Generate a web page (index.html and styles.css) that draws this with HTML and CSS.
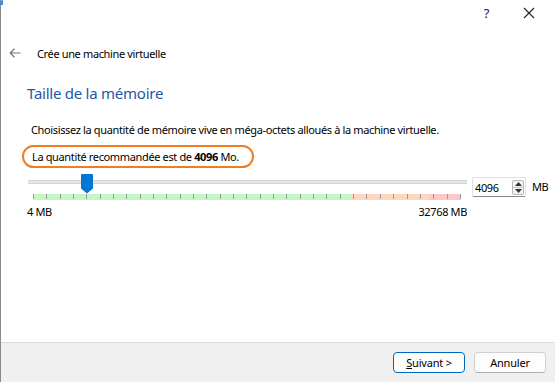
FILE: index.html
```html
<!DOCTYPE html>
<html lang="fr">
<head>
<meta charset="utf-8">
<title>Crée une machine virtuelle</title>
<link rel="stylesheet" href="styles.css">
</head>
<body>
<div class="window">
  <div class="titlebar">
    <span class="tb-btn help">?</span>
    <span class="tb-btn close">
      <svg width="12" height="12" viewBox="0 0 12 12"><path d="M1 1 L11 11 M11 1 L1 11" stroke="#222" stroke-width="1.1" fill="none"/></svg>
    </span>
  </div>
  <div class="header">
    <svg class="back" width="12" height="10" viewBox="0 0 12 10"><path d="M5.5 0.8 L1.2 5 L5.5 9.2 M1.2 5 H11.5" stroke="#777" stroke-width="1.2" fill="none"/></svg>
    <span class="header-title">Crée une machine virtuelle</span>
  </div>
  <div class="content">
    <h1 class="page-title">Taille de la mémoire</h1>
    <p class="desc">Choisissez la quantité de mémoire vive en méga-octets alloués à la machine virtuelle.</p>
    <div class="recommend">La quantité recommandée est de <b>4096</b> Mo.</div>
    <div class="slider-row">
      <div class="slider">
        <div class="track"></div>
        <svg class="thumb" width="12" height="20" viewBox="0 0 12 20"><path d="M1 0 H11 Q12 0 12 1 V14.5 L6 19.5 L0 14.5 V1 Q0 0 1 0 Z" fill="#0078d4"/></svg>
        <div class="band"></div>
      </div>
      <div class="spin">
        <span class="spin-val">4096</span>
        <span class="spin-btns">
          <span class="spin-up"><svg width="7" height="4" viewBox="0 0 7 4"><path d="M0 4 L3.5 0 L7 4Z" fill="#333"/></svg></span>
          <span class="spin-down"><svg width="7" height="4" viewBox="0 0 7 4"><path d="M0 0 L3.5 4 L7 0Z" fill="#333"/></svg></span>
        </span>
      </div>
      <span class="unit">MB</span>
    </div>
    <div class="range-labels">
      <span>4 MB</span>
      <span>32768 MB</span>
    </div>
  </div>
  <div class="footer">
    <button class="btn primary"><u>S</u>uivant &gt;</button>
    <button class="btn">Annuler</button>
  </div>
</div>
</body>
</html>
```

FILE: styles.css
```css
* { box-sizing: border-box; }
html, body { margin: 0; padding: 0; }
body {
  width: 555px;
  height: 382px;
  overflow: hidden;
  background: #fff;
  font-family: "Noto Sans", "DejaVu Sans", sans-serif;
  font-size: 11px;
  letter-spacing: -0.36px;
  color: #000;
}
.window {
  width: 555px;
  height: 382px;
  display: flex;
  flex-direction: column;
  border-left: 1px solid #8a8a8a;
  position: relative;
}
.window::before {
  content: "";
  position: absolute;
  left: -1px;
  top: 0;
  width: 3px;
  height: 5px;
  background: #3a8ee6;
  border-top-left-radius: 3px;
}
.titlebar {
  height: 30px;
  display: flex;
  justify-content: flex-end;
  align-items: center;
  padding-right: 20px;
  padding-bottom: 4px;
}
.tb-btn {
  display: flex;
  align-items: center;
  justify-content: center;
  height: 16px;
}
.help {
  font-size: 13px;
  margin-right: 34px;
  color: #222;
}
.header {
  height: 42px;
  display: flex;
  align-items: center;
  padding-left: 8px;
  padding-top: 4px;
}
.back { margin-right: 16px; }
.header-title { font-size: 11px; }
.content {
  flex: 1;
  padding-left: 26px;
  display: flex;
  flex-direction: column;
}
.page-title {
  margin: 11px 0 0 0;
  font-size: 15px;
  font-weight: normal;
  letter-spacing: -0.25px;
  color: #1d57a6;
  line-height: 20px;
}
.desc {
  margin: 19px 0 0 4px;
  line-height: 16px;
}
.recommend {
  margin: 7px 0 0 -5px;
  align-self: flex-start;
  width: 232px;
  height: 23px;
  border: 2px solid #f07d22;
  border-radius: 12px;
  padding-left: 8px;
  line-height: 19px;
  white-space: nowrap;
}
.recommend b { font-weight: bold; }
.slider-row {
  margin-top: 5px;
  display: flex;
  align-items: flex-start;
  height: 28px;
}
.slider {
  position: relative;
  width: 439px;
  height: 28px;
  margin-left: 1px;
}
.track {
  position: absolute;
  left: 0;
  right: 0;
  top: 7px;
  height: 4px;
  background: #e6e6e6;
  border-top: 1px solid #d4d4d4;
  border-bottom: 1px solid #d4d4d4;
}
.thumb {
  position: absolute;
  left: 53px;
  top: 1px;
}
.band {
  position: absolute;
  left: 5px;
  top: 21px;
  width: 428px;
  height: 6px;
  background:
    repeating-linear-gradient(to right, #9a9a9a 0 1px, transparent 1px 13.34px) top left / 100% 5px no-repeat,
    linear-gradient(to right, #c4f7c4 0 319px, #fdd6c0 319px 396px, #fdc8c8 396px 428px);
}
.spin {
  margin-left: 5px;
  margin-top: 4px;
  width: 54px;
  height: 20px;
  border: 1px solid #e0e0e0;
  border-bottom-color: #8a8a8a;
  border-radius: 2px;
  display: flex;
  align-items: center;
  justify-content: space-between;
  padding-left: 2px;
  padding-right: 1px;
  background: #fff;
}
.spin-val { font-size: 11px; }
.spin-btns {
  width: 12px;
  height: 15px;
  border: 1px solid #b8b8b8;
  border-radius: 2px;
  display: flex;
  flex-direction: column;
  background: #f4f4f4;
}
.spin-up, .spin-down {
  flex: 1;
  display: flex;
  align-items: center;
  justify-content: center;
}
.spin-up { border-bottom: 1px solid #c8c8c8; }
.unit {
  margin-left: 6px;
  margin-top: 6px;
  line-height: 16px;
}
.range-labels {
  width: 440px;
  display: flex;
  justify-content: space-between;
  margin-top: 3px;
  line-height: 16px;
}
.footer {
  height: 40px;
  background: #f0f0f0;
  border-top: 1px solid #dcdcdc;
  display: flex;
  justify-content: flex-end;
  align-items: flex-start;
  padding-top: 9px;
  padding-right: 9px;
  gap: 9px;
}
.btn {
  width: 72px;
  height: 21px;
  font-family: inherit;
  font-size: 11px;
  letter-spacing: -0.2px;
  background: #fdfdfd;
  border: 1px solid #d0d0d0;
  border-bottom-color: #b0b0b0;
  border-radius: 4px;
  padding: 0;
  color: #000;
}
.btn.primary {
  border: 1px solid #0067c0;
}
```
